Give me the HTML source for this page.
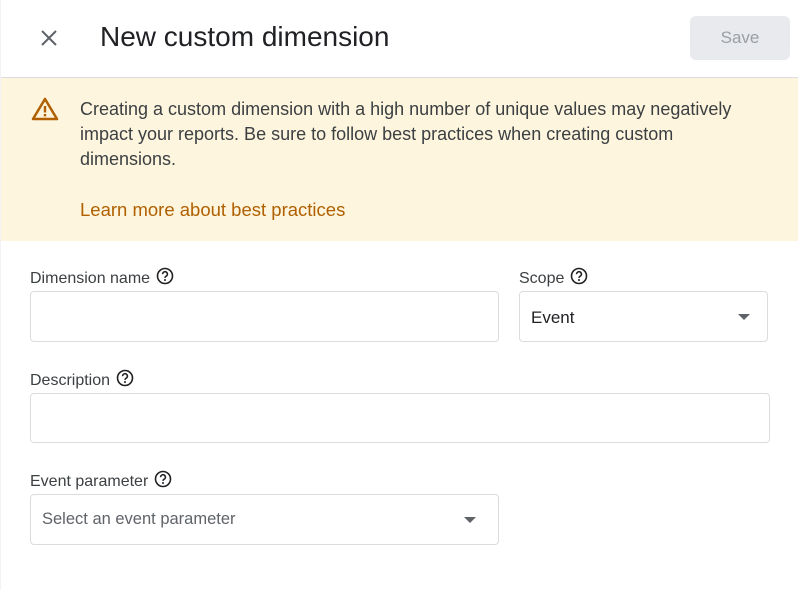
<!DOCTYPE html>
<html><head><meta charset="utf-8"><style>
*{margin:0;padding:0;box-sizing:border-box}
body{width:798px;height:611px;background:#fff;font-family:"Liberation Sans",Roboto,sans-serif;position:relative;overflow:hidden;color:#3c4043}
.a{position:absolute}
.box{position:absolute;border:1px solid #dadce0;border-radius:4px;background:#fff}
.lbl{position:absolute;font-size:16px;color:#3c4043;white-space:nowrap}
.lbl svg{vertical-align:-2px;margin-left:6px}
.tri{position:absolute;width:0;height:0;border-left:6px solid transparent;border-right:6px solid transparent;border-top:6px solid #5f6368}
</style></head><body>
<svg class="a" style="left:39px;top:28px" width="20" height="20" viewBox="0 0 20 20"><path d="M3 3L17 17M17 3L3 17" stroke="#5f6368" stroke-width="2"/></svg>
<div class="a" style="left:100px;top:21px;font-size:28px;color:#202124;white-space:nowrap">New custom dimension</div>
<div class="a" style="left:690px;top:16px;width:100px;height:44px;background:#e8eaed;border-radius:6px;color:#9aa0a6;font-size:17px;text-align:center;line-height:44px">Save</div>
<div class="a" style="left:0;top:77px;width:798px;height:1px;background:#dadce0"></div>
<div class="a" style="left:0;top:78px;width:798px;height:163px;background:#fdf5dd"></div>
<svg class="a" style="left:31px;top:97px" width="28" height="24" viewBox="0 0 28 24"><path d="M14 2L26 22H2Z" fill="none" stroke="#b06000" stroke-width="2.5" stroke-linejoin="round"/><rect x="12.8" y="9" width="2.4" height="6.5" fill="#b06000"/><rect x="12.8" y="17" width="2.4" height="2.4" fill="#b06000"/></svg>
<div class="a" style="left:80px;top:97px;font-size:18px;line-height:25px;color:#3c4043;width:680px">Creating a custom dimension with a high number of unique values may negatively impact your reports. Be sure to follow best practices when creating custom dimensions.</div>
<div class="a" style="left:80px;top:199px;font-size:18.5px;color:#b06000;white-space:nowrap">Learn more about best practices</div>

<div class="lbl" style="left:30px;top:267px">Dimension name<svg width="18" height="18" viewBox="0 0 18 18"><circle cx="9" cy="9" r="7.5" fill="none" stroke="#202124" stroke-width="1.6"/><path d="M6.6 7.2a2.4 2.4 0 1 1 3.4 2.1c-.7.4-1 .8-1 1.6" fill="none" stroke="#202124" stroke-width="1.6"/><circle cx="9" cy="13" r="1" fill="#202124"/></svg></div>
<div class="box" style="left:30px;top:291px;width:469px;height:51px"></div>
<div class="lbl" style="left:519px;top:267px">Scope<svg width="18" height="18" viewBox="0 0 18 18"><circle cx="9" cy="9" r="7.5" fill="none" stroke="#202124" stroke-width="1.6"/><path d="M6.6 7.2a2.4 2.4 0 1 1 3.4 2.1c-.7.4-1 .8-1 1.6" fill="none" stroke="#202124" stroke-width="1.6"/><circle cx="9" cy="13" r="1" fill="#202124"/></svg></div>
<div class="box" style="left:519px;top:291px;width:249px;height:51px"></div>
<div class="a" style="left:531px;top:308px;font-size:17px;color:#202124">Event</div>
<div class="tri" style="left:738px;top:314px"></div>

<div class="lbl" style="left:30px;top:369px">Description<svg width="18" height="18" viewBox="0 0 18 18"><circle cx="9" cy="9" r="7.5" fill="none" stroke="#202124" stroke-width="1.6"/><path d="M6.6 7.2a2.4 2.4 0 1 1 3.4 2.1c-.7.4-1 .8-1 1.6" fill="none" stroke="#202124" stroke-width="1.6"/><circle cx="9" cy="13" r="1" fill="#202124"/></svg></div>
<div class="box" style="left:30px;top:393px;width:740px;height:50px"></div>

<div class="lbl" style="left:30px;top:470px">Event parameter<svg width="18" height="18" viewBox="0 0 18 18"><circle cx="9" cy="9" r="7.5" fill="none" stroke="#202124" stroke-width="1.6"/><path d="M6.6 7.2a2.4 2.4 0 1 1 3.4 2.1c-.7.4-1 .8-1 1.6" fill="none" stroke="#202124" stroke-width="1.6"/><circle cx="9" cy="13" r="1" fill="#202124"/></svg></div>
<div class="box" style="left:30px;top:494px;width:469px;height:51px"></div>
<div class="a" style="left:42px;top:510px;font-size:16.5px;color:#5f6368;white-space:nowrap">Select an event parameter</div>
<div class="tri" style="left:464px;top:517px"></div>
<div class="a" style="left:0;top:0;width:1px;height:590px;background:#f1f3f4"></div>
</body></html>
